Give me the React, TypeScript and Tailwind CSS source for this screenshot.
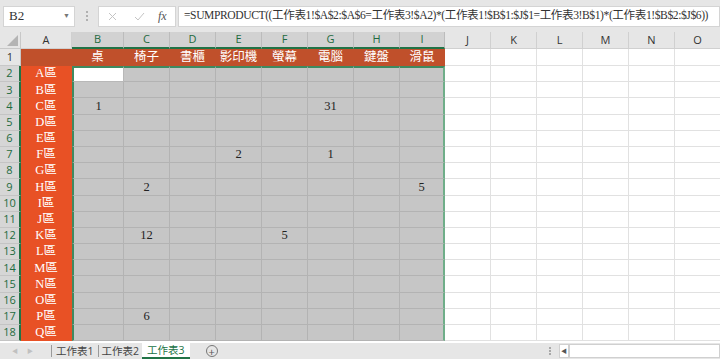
import React from "react";

const COLS = ["A", "B", "C", "D", "E", "F", "G", "H", "I", "J", "K", "L", "M", "N", "O"];
const WIDTHS = [51, 52, 46, 46, 46, 46, 46, 46, 45, 46, 46, 46, 46, 46, 46];
const HEADS = ["桌", "椅子", "書櫃", "影印機", "螢幕", "電腦", "鍵盤", "滑鼠"];
const ZONES = "ABCDEFGHIJKLMNOPQR".split("");

// row -> col index -> value
const VALUES: Record<number, Record<number, string>> = {
  4: { 1: "1", 6: "31" },
  7: { 4: "2", 6: "1" },
  9: { 2: "2", 8: "5" },
  12: { 2: "12", 5: "5" },
  17: { 2: "6" },
};

const serif = { fontFamily: '"Liberation Serif", "Noto Sans CJK TC", serif' };
const sans = { fontFamily: '"Open Sans", "Liberation Sans", "Noto Sans CJK TC", sans-serif' };

function FormulaBar() {
  return (
    <div className="flex h-[32px] items-center bg-[#e6e6e6] pl-[3px]">
      <div
        className="flex h-[21px] w-[72px] items-center justify-between border border-[#d4d4d4] bg-white pl-[5px] pr-[4px] text-[13px] text-[#333]"
        style={serif}
      >
        <span>B2</span>
        <span className="text-[7px] text-[#777]">▼</span>
      </div>
      <div className="flex w-[23px] flex-col items-center gap-[2px]">
        <span className="h-[2px] w-[2px] bg-[#b0b0b0]" />
        <span className="h-[2px] w-[2px] bg-[#b0b0b0]" />
        <span className="h-[2px] w-[2px] bg-[#b0b0b0]" />
      </div>
      <div className="flex h-[21px] w-[78px] items-center border border-[#d4d4d4] bg-white text-[#bdbdbd]">
        <svg className="ml-[9px]" width="9" height="9" viewBox="0 0 9 9">
          <path d="M1 1L8 8M8 1L1 8" stroke="#c4c4c4" strokeWidth="1" />
        </svg>
        <svg className="ml-[17px]" width="11" height="9" viewBox="0 0 11 9">
          <path d="M1 5L4 8L10 1" stroke="#c4c4c4" strokeWidth="1" fill="none" />
        </svg>
        <span className="ml-[13px] text-[12px] italic text-[#555]" style={serif}>
          fx
        </span>
      </div>
      <div
        className="ml-[2px] flex h-[21px] flex-1 items-center overflow-hidden whitespace-nowrap border border-[#d4d4d4] bg-white pl-[5px] text-[11.6px] tracking-[-0.42px] text-[#333]"
        style={serif}
      >
        =SUMPRODUCT((工作表1!$A$2:$A$6=工作表3!$A2)*(工作表1!$B$1:$J$1=工作表3!B$1)*(工作表1!$B$2:$J$6))
      </div>
    </div>
  );
}

function ColumnHeaders() {
  return (
    <div className="flex h-[17px]">
      <div className="relative h-[17px] w-[21px] shrink-0 border-r border-b border-[#c8c8c8] bg-[#e6e6e6]">
        <div className="absolute bottom-[2px] right-[2px] h-0 w-0 border-b-[11px] border-l-[11px] border-b-[#b4b4b4] border-l-transparent" />
      </div>
      {COLS.map((c, i) => {
        const sel = i >= 1 && i <= 8;
        return (
          <div
            key={c}
            style={{ width: WIDTHS[i], ...sans }}
            className={
              sel
                ? "flex shrink-0 items-center justify-center border-r border-b-2 border-r-[#bcbcbc] border-b-[#217346] bg-[#d2d2d2] text-[11px] text-[#1e6b40]"
                : "flex shrink-0 items-center justify-center border-r border-b border-[#d0d0d0] bg-[#e6e6e6] text-[11px] text-[#333]"
            }
          >
            {c}
          </div>
        );
      })}
    </div>
  );
}

function Row({ n }: { n: number }) {
  const first = n === 1;
  const h = first ? "h-[17px]" : "h-[16.2px]";
  return (
    <div className={`flex ${h}`}>
      <div
        style={sans}
        className={
          first
            ? "flex w-[21px] shrink-0 items-center justify-center border-r border-b border-[#c8c8c8] bg-[#e6e6e6] text-[11px] text-[#333]"
            : "flex w-[21px] shrink-0 items-center justify-center border-r-2 border-b border-r-[#217346] border-b-[#c4c4c4] bg-[#d6d6d6] text-[11px] text-[#1e6b40]"
        }
      >
        {n}
      </div>
      {COLS.map((c, i) => {
        const w = WIDTHS[i];
        let cls = "";
        let text = "";
        if (first) {
          if (i <= 8) {
            cls = "bg-[#c0502b] text-white border-r border-b border-[#c0502b]";
            text = i >= 1 ? HEADS[i - 1] : "";
          } else {
            cls = "bg-white border-r border-b border-[#e1e1e1]";
          }
        } else if (i === 0) {
          cls = "bg-[#e85125] text-white border-r border-b border-[#e85125]";
          text = ZONES[n - 2] + "區";
        } else if (i <= 8) {
          const active = n === 2 && i === 1;
          cls = active
            ? "bg-white border-r border-b border-[#b8b8b8] text-[#222]"
            : "bg-[#c6c6c6] border-r border-b border-[#b3b3b3] text-[#222]";
          if (i === 1) cls += " border-l-2 border-l-[#3e8a60]";
          if (i === 8) cls += " border-r-2 border-r-[#6fae89]";
          text = VALUES[n]?.[i] ?? "";
        } else {
          cls = "bg-white border-r border-b border-[#e1e1e1]";
        }
        if (n === 2 && i >= 1 && i <= 8) cls += " border-t-2 border-t-[#3e8a60]";
        return (
          <div
            key={c}
            style={{ width: w, ...serif }}
            className={`flex shrink-0 items-center justify-center text-[12.5px] leading-none ${cls}`}
          >
            {text}
          </div>
        );
      })}
    </div>
  );
}

function SheetTabs() {
  return (
    <div className="flex h-[16px] items-center bg-[#e6e6e6] text-[10.5px] text-[#444]" style={sans}>
      <span className="ml-[12px] text-[6px] text-[#c0c0c0]">◀</span>
      <span className="ml-[9px] text-[6px] text-[#c0c0c0]">▶</span>
      <span className="ml-[18px] h-[12px] w-px bg-[#9a9a9a]" />
      <span className="px-[4px] leading-none">工作表1</span>
      <span className="h-[12px] w-px bg-[#9a9a9a]" />
      <span className="px-[3px] leading-none">工作表2</span>
      <span className="flex h-[16px] items-center border-b-2 border-[#217346] bg-white px-[5px] leading-none text-[#217346]">
        工作表3
      </span>
      <span className="ml-[16px] flex h-[12px] w-[12px] items-center justify-center rounded-full border border-[#777] text-[11px] leading-none text-[#555]">
        +
      </span>
      <div className="ml-auto flex items-center">
        <div className="mr-[8px] flex flex-col gap-[1px]">
          <span className="h-[2px] w-[2px] bg-[#a8a8a8]" />
          <span className="h-[2px] w-[2px] bg-[#a8a8a8]" />
          <span className="h-[2px] w-[2px] bg-[#a8a8a8]" />
        </div>
        <div className="flex h-[14px] w-[10px] items-center justify-center border border-[#d0d0d0] bg-white text-[6px] text-[#555]">
          ◀
        </div>
        <div className="h-[14px] w-[151px] border border-[#d0d0d0] bg-white" />
      </div>
    </div>
  );
}

export default function App() {
  const rows = Array.from({ length: 18 }, (_, i) => i + 1);
  return (
    <div className="h-[359px] w-[720px] overflow-hidden bg-white">
      <FormulaBar />
      <div className="h-[311px] overflow-hidden">
        <ColumnHeaders />
        {rows.map((n) => (
          <Row key={n} n={n} />
        ))}
      </div>
      <SheetTabs />
    </div>
  );
}
